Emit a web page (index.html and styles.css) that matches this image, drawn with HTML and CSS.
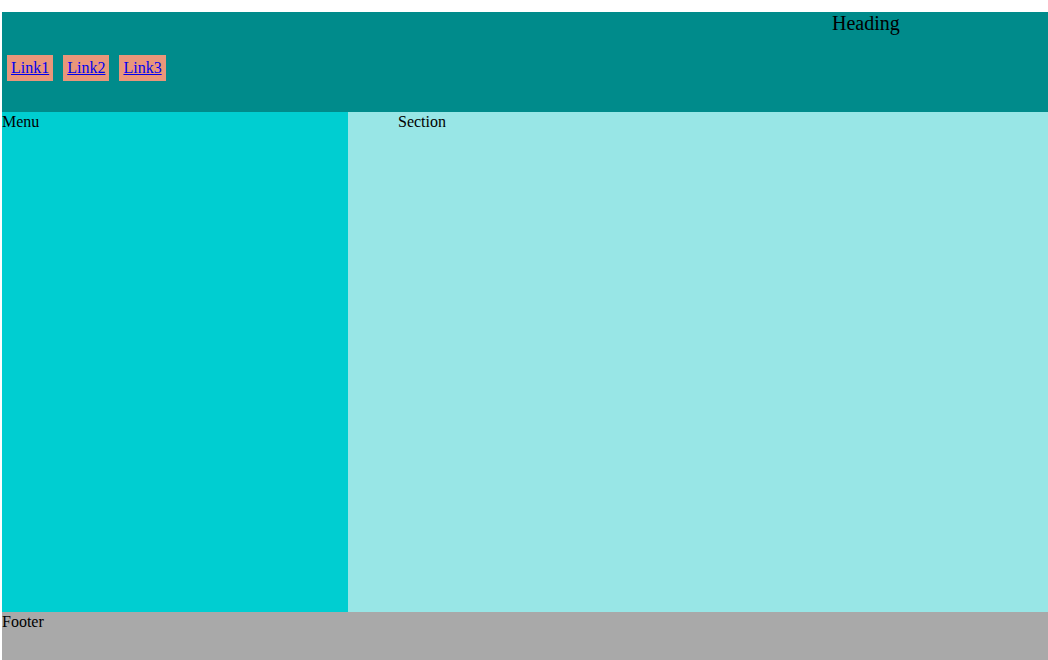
FILE: index.html
```html
<!DOCTYPE html>
<html>
<head>
<meta charset="utf-8">
<link rel="stylesheet" href="styles.css">
</head>
<body>
<header class="top">
  <h1 class="heading">Heading</h1>
  <nav class="links">
    <a href="#" class="link">Link1</a>
    <a href="#" class="link">Link2</a>
    <a href="#" class="link">Link3</a>
  </nav>
</header>
<div class="main">
  <aside class="menu">Menu</aside>
  <section class="section">Section</section>
</div>
<footer class="footer">Footer</footer>
</body>
</html>
```
FILE: styles.css
```css
html, body {
  overflow: hidden;
}
body {
  margin: 12px 0 0 2px;
  font-family: "Liberation Serif", "Times New Roman", serif;
  font-size: 16px;
  color: #000;
}
.top {
  background: #008B8B;
  height: 100px;
  display: flex;
  flex-direction: column;
}
.heading {
  margin: 0 0 0 830px;
  font-size: 20px;
  font-weight: normal;
  line-height: 23px;
}
.links {
  display: flex;
  gap: 10px;
  margin-top: 20px;
  padding-left: 5px;
}
.link {
  background: #E9967A;
  color: #0000EE;
  padding: 4px 4px;
  line-height: 18px;
}
.main {
  display: flex;
  height: 500px;
}
.menu {
  width: 346px;
  background: #00CED1;
  line-height: 19px;
}
.section {
  flex: 1;
  background: #98E6E6;
  padding-left: 50px;
  line-height: 19px;
}
.footer {
  background: #A9A9A9;
  height: 50px;
  line-height: 19px;
}
```
